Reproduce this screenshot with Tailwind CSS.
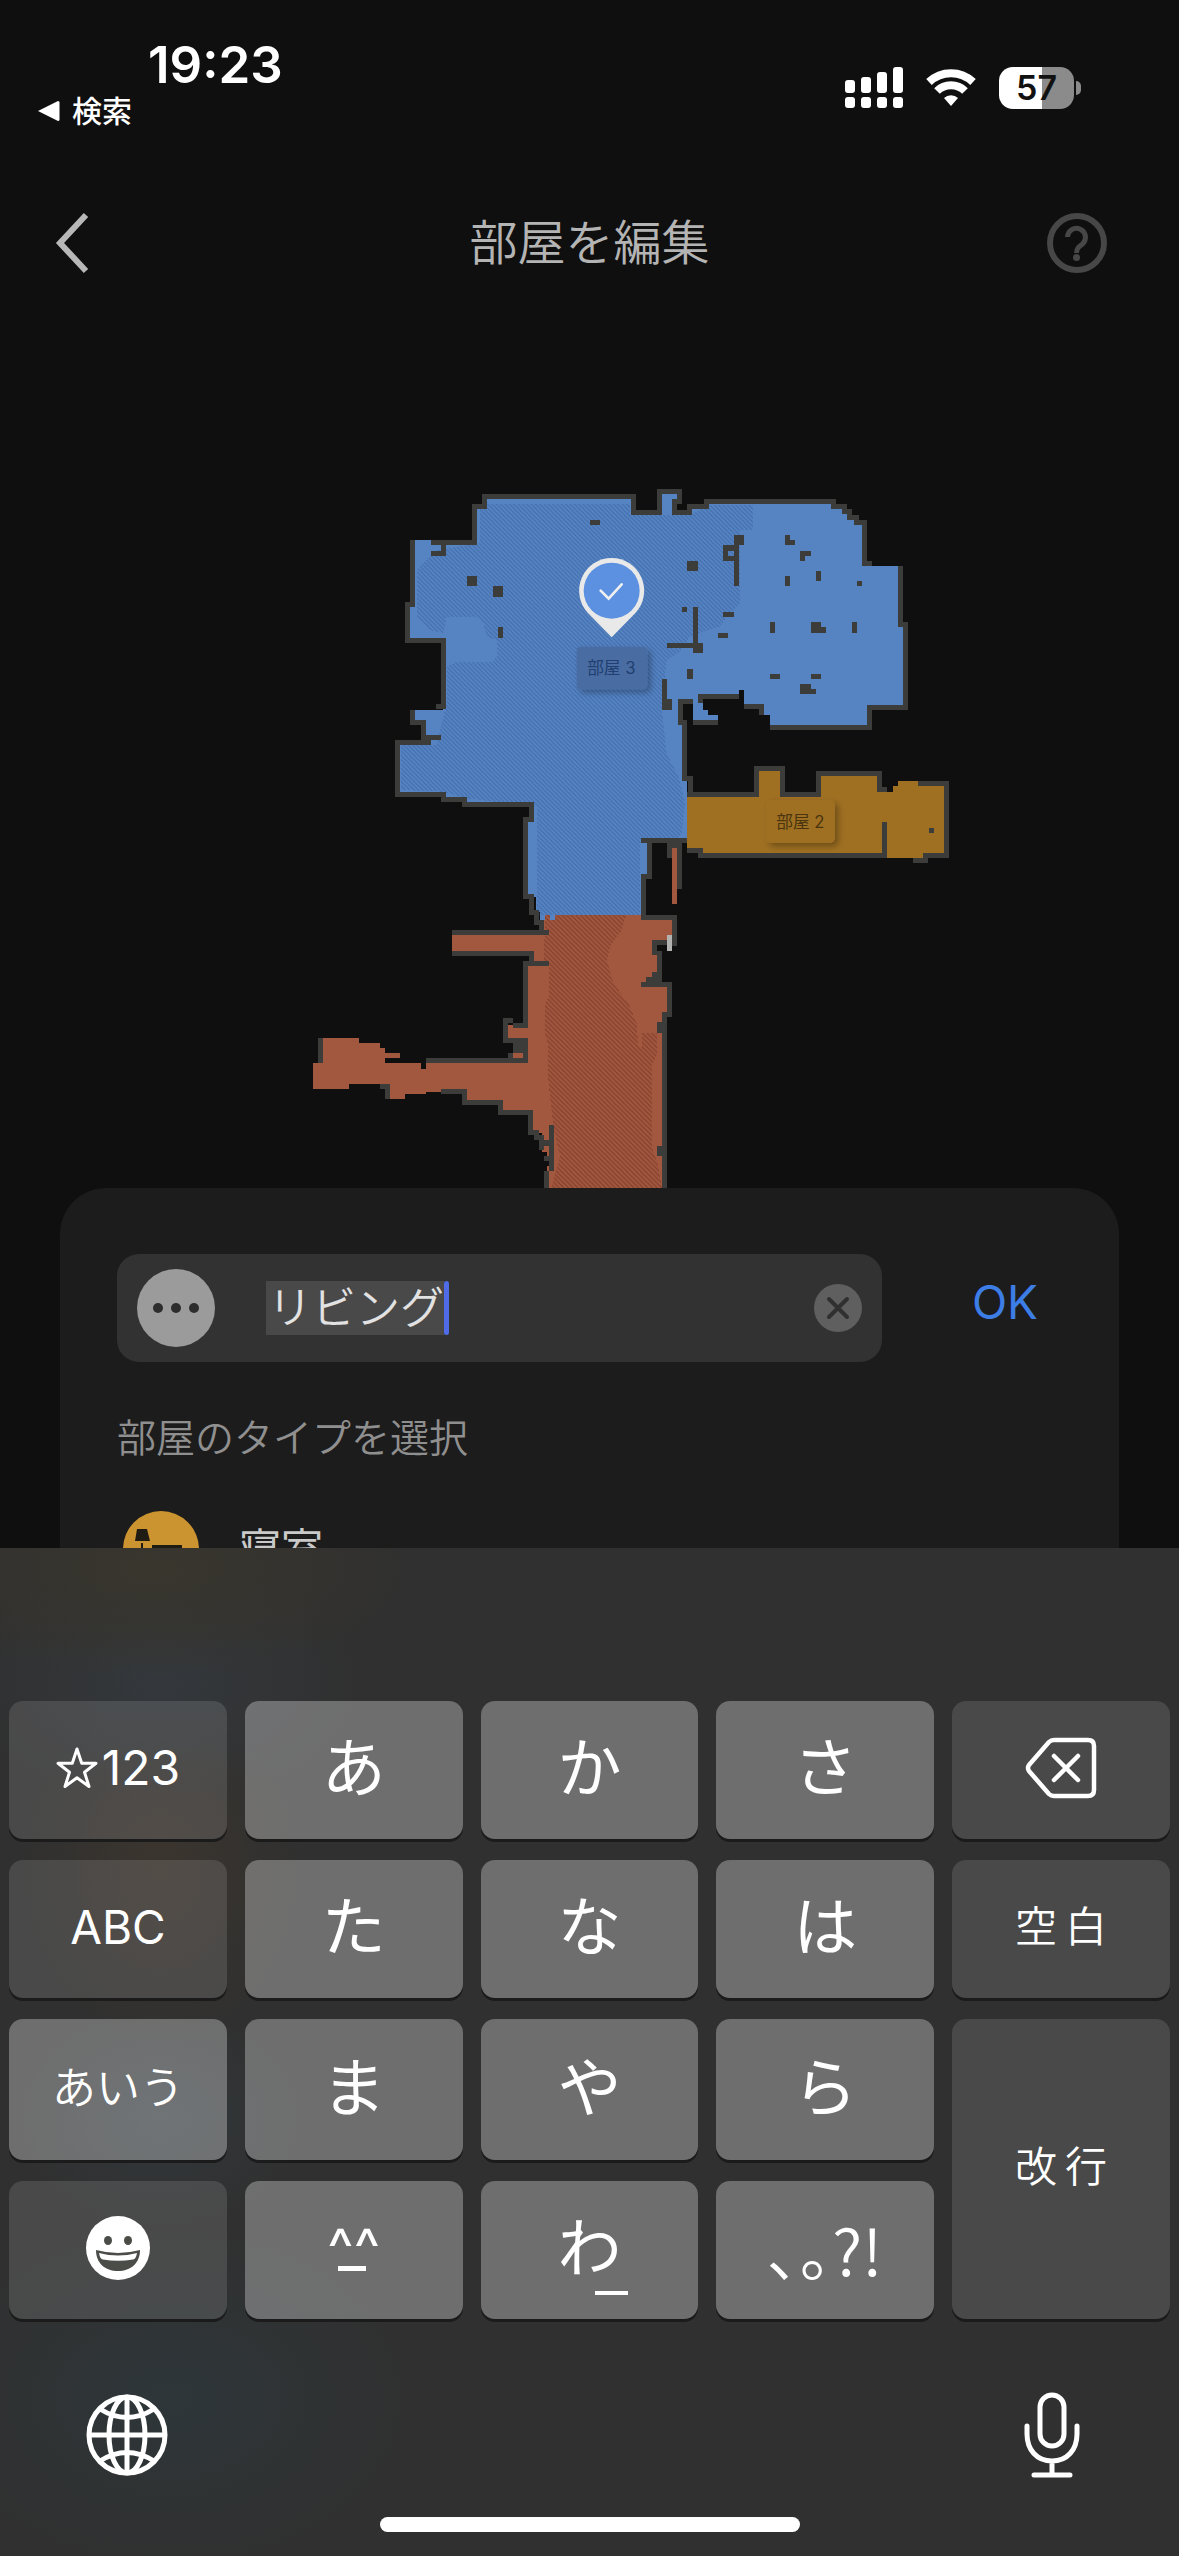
<!DOCTYPE html>
<html lang="ja">
<head>
    <meta charset="UTF-8">
    <meta name="viewport" content="width=device-width, initial-scale=1.0">
    <title>部屋を編集</title>
    <script src="https://cdn.jsdelivr.net/npm/@tailwindcss/browser@4"></script>
</head>
<body class="h-screen flex flex-col overflow-hidden bg-[#0f0f0f] text-white font-['Inter','Noto_Sans_CJK_JP',sans-serif]">

    <div class="flex-1 min-h-0 flex flex-col overflow-hidden">
        <!-- Status bar -->
        <div class="shrink-0 flex justify-between pl-9 pr-[98px] pt-9">
            <div class="flex flex-col">
                <span class="pl-28 text-[51px] leading-[58px] font-semibold">19:23</span>
                <a href="#" class="flex items-center gap-3 text-[30px] leading-[34px] font-medium">
                    <svg class="w-6 h-6" viewBox="0 0 24 24" fill="#fff"><path d="M2 12 22 2q1.500 0 1.500 1.500v17q0 1.500-1.500 1.500z"/></svg>
                    検索
                </a>
            </div>
            <div class="flex items-start gap-[22px] pt-[31px]">
                <svg class="w-[58px] h-[42px]" viewBox="0 0 58 42" fill="#fff">
                    <rect x="0" y="13" width="10" height="13" rx="3"/><rect x="16" y="10" width="10" height="16" rx="3"/>
                    <rect x="32" y="5" width="10" height="21" rx="3"/><rect x="48" y="0" width="10" height="26" rx="3"/>
                    <rect x="0" y="30" width="10" height="11" rx="3"/><rect x="16" y="30" width="10" height="11" rx="3"/>
                    <rect x="32" y="30" width="10" height="11" rx="3"/><rect x="48" y="30" width="10" height="11" rx="3"/>
                </svg>
                <svg class="w-[52px] h-[42px]" viewBox="0 0 50 42" fill="none" stroke="#fff" stroke-width="8">
                    <path d="M3 15a32 32 0 0 1 44 0"/><path d="M11 24a20 20 0 0 1 28 0"/>
                    <path d="M25 39l-7-8a10 10 0 0 1 14 0z" fill="#fff" stroke="none"/>
                </svg>
                <div class="flex items-center gap-[2px]">
                    <div class="w-[75px] h-[42px] rounded-[14px] bg-linear-to-r from-white from-57% to-[#8b8b8b] to-57% text-[#111] text-[34px] leading-[42px] font-semibold text-center">57</div>
                    <div class="w-[5px] h-[14px] rounded-r-full bg-[#8b8b8b]"></div>
                </div>
            </div>
        </div>

        <!-- Title bar -->
        <header class="shrink-0 flex items-center justify-between px-[54px] pt-[74px]">
            <button aria-label="戻る" class="w-[78px] h-[82px] flex items-center">
                <svg class="w-9 h-[62px]" viewBox="0 0 36 62" fill="none" stroke="#b8b8b8" stroke-width="6"><path d="M32 3 6 31l26 28"/></svg>
            </button>
            <h1 class="text-[48px] leading-[82px] font-[350] text-[#b4b4b4]">部屋を編集</h1>
            <button aria-label="ヘルプ" class="w-[78px] h-[60px]">
                <svg class="w-[60px] h-[60px]" viewBox="0 0 60 60" fill="none" stroke="#474747" stroke-width="6">
                    <circle cx="30" cy="30" r="27"/>
                    <path d="M20.500 24a9 9 0 1 1 15 7c-4 3-6 4.500-6 9" stroke-width="5"/>
                    <circle cx="29.500" cy="44.500" r="3.500" fill="#474747" stroke="none"/>
                </svg>
            </button>
        </header>

        <!-- Floor map -->
        <svg class="shrink-0 w-full" viewBox="0 852 3537 2712" shape-rendering="crispEdges">
            <defs>
                <pattern id="hatch-blue" width="13" height="13" patternUnits="userSpaceOnUse">
                    <path d="M-2-2 15 15M-2 11 2 15M11-2 15 2" stroke="#3f69a9" stroke-width="3" shape-rendering="auto"/>
                </pattern>
                <pattern id="hatch-red" width="14" height="14" patternUnits="userSpaceOnUse">
                    <path d="M-2-2 16 16M-2 12 2 16M12-2 16 2" stroke="#7d3b2a" stroke-width="3" shape-rendering="auto"/>
                </pattern>
                <filter id="soft" x="-20%" y="-20%" width="150%" height="160%"><feDropShadow dx="10" dy="10" stdDeviation="10" flood-opacity=".3"/></filter>
            </defs>

            <!-- room 1 -->
            <g transform="translate(1140 2340)">
                <path fill="#a2573f" d="M490 405H783V420H876V488H824V520H838V580L798 605V612H868V706H853V1224H500V1115H485V1060H453V997H360V967H252V935H138V942H75V957H30V912H-93V927H-201V849H-171V774H-63V789H0V804H15V819H60V834H15V849H123V866H138V842H437V780H376V735H437V550H453V520H216V457H490z"/>
                <path fill="url(#hatch-red)" d="M495 405H740L725 450 690 500 680 540 700 610 745 670 770 730 775 800H785V760H832V820L815 860V1100L832 1150 846 1223H515L540 1130 520 1040 505 900V800L495 760V670L508 650V550H492z"/>
                <path fill="none" stroke="#3c3c3a" stroke-width="15" d="M783 412H884V497M861 488H824V525M838 512V605M783 612H868V703H853V1224M216 457H507M216 520H453V550M508 550H437V735H399M399 720H376V780H437V842H137M183 935H253V967H362V997H452V1057H468V1072H485V1110M515 1035V1172M500 1172V1224M0 919H22V957M-178 774V849M898 190V327"/>
                <path fill="#3c3c3a" d="M832 727h20v32h-20zM832 1097h20v30h-20zM399 780h45v40h-45zM384 820h15v14h-15zM429 815h15v30h-15zM492 1080h16v18h-16zM492 1128h16v15h-16zM861 190h45v14h-45zM861 200h15v34h-15zM798 605v-15h18v-15h22v30z"/>
                <path fill="#a2573f" d="M399 820h30v14h-30zM876 204h15v168h-15zM-171 849h30v-20h-30z"/>
                <path fill="#0f0f0f" d="M492 1143h15v15h-15z"/>
                <path fill="#b3b3b1" d="M861 465h15v47h-15z"/>
            </g>

            <!-- room 3 -->
            <g transform="translate(1140 1410)">
                <path fill="#5684c3" d="M314 79H760V127H839V64H898V87H883V127H928V110H978V95H1360V110H1392V125H1408V142H1430V157H1453V280H1475V288H1562V464H1577V712H1469V772H1170V735H1145V710H1092V660H1077V680H970V720H985V735H1015V757H940V694H900V757H914V924H921V1112H808V1220H791V1335H525V1350H510V1335H495V1350H480V1327H468V1280H437V1048H453V1004H254V989H190V973H53V818H130V757H98V720H190V512H83V403H98V210H152V217H283V110H314z"/>
                <path fill="url(#hatch-blue)" d="M300 102H750V135H932L985 105H1120V180H1080V400L1040 440 1020 470 930 500 900 545 860 570 846 720 860 850 895 920 915 1000 905 1090 880 1120H780V1335H470V1010L260 985 190 965 62 960V825H170L200 700V590L230 575H340L350 560V510L320 500 310 460 290 440H200L190 490 150 480 110 440V300L170 240 300 220z"/>
                <path fill="none" stroke="#3c3c3a" stroke-width="15" d="M98 210V403H83V512H190V710H168M152 217H283V110H314V79H760V127H839V64H898V94H883V127H928V110H978V95H1360V110H1392V125H1408V142H1430V157H1453V280H1475M1562 288V464H1577V712H1469V772H1170M1145 735V710H1092M1077 680H962V700M940 757H1015M940 694H900V757H914V924H930V972M921 1112H783M808 1112V1220H791V1335M98 720V757H130V803H182M152 818H53V973H190V989H254V1004H453V1048H437V1280H453V1327H468V1358H484V1387H506M152 250H190V225M1069 225V348"/>
                <path fill="#3c3c3a" d="M630 150h30v15h-30zM261 318h30v30h-30zM339 348h30v33h-30zM354 471h15v32h-15zM921 272h33v30h-33zM906 411h15v15h-15zM939 411h15v110h-15zM861 519h90v15h-90zM939 519h30v30h-30zM921 597h18v30h-18zM846 627h15v92h-15zM861 687h15v32h-15z"/>
                <path fill="#3c3c3a" fill-rule="evenodd" d="M1062 195h30v30h-30zM1029 225h33v47h-33zM1044 242h18v15h-18zM1029 426h33v15h-33zM1014 489h30v15h-30zM1215 195h15v15h15v15h-30zM1260 243h33v15h-18v14h-15zM1308 303h15v30h-15zM1215 318h15v30h-15zM1431 333h15v15h-15zM1170 457h15v32h-15zM1293 457h30v14h15v18h-45zM1416 457h15v32h-15zM1170 612h30v15h-30zM1293 612h30v15h-30zM1260 642h33v15h15v15h-48z"/>
            </g>

            <!-- room 2 -->
            <g transform="translate(1920 1410)">
                <path fill="#9f7022" d="M141 972H350V895H427V972H535V910H718V965H758V948H774V933H834V940H920V1157H850V1164H740V1150H141z"/>
                <path fill="none" stroke="#3c3c3a" stroke-width="15" d="M142 972H350V895H427V972H535V910H718V957H741M834 940H920V1157H857V1172H820M141 1142H182V1157H733V1056"/>
                <path fill="#3c3c3a" d="M867 1073h15v15h-15z"/>
                <rect x="378" y="990" width="206" height="128" rx="12" fill="#9f7022" filter="url(#soft)"/>
                <text x="481" y="1073" text-anchor="middle" font-size="50" fill="#4a350f">部屋 2</text>
            </g>

            <!-- selected room pin -->
            <g transform="translate(1140 1410)" shape-rendering="auto">
                <rect x="590" y="530" width="212" height="128" rx="12" fill="#4a6da3" filter="url(#soft)"/>
                <text x="694" y="612" text-anchor="middle" font-size="50" fill="#213f70">部屋 3</text>
                <path fill="#e9e9e9" d="M695 264a98 98 0 0 1 72 164L695 502 623 428A98 98 0 0 1 695 264z"/>
                <circle cx="695" cy="362" r="84" fill="#5b91e0"/>
                <path d="M662 362l24 24 39-43" fill="none" stroke="#f0f0f0" stroke-width="8" stroke-linecap="round"/>
            </g>
        </svg>

        <!-- Room name sheet -->
        <section class="relative shrink-0 mx-[60px] px-[57px] pt-[66px] rounded-t-[46px] bg-[#1c1c1c]">
            <div class="flex items-center justify-between pr-6">
                <div class="flex items-center w-[765px] h-[108px] px-5 rounded-[22px] bg-[#323232]">
                    <svg class="shrink-0 w-[78px] h-[78px]" viewBox="0 0 78 78" fill="#2d2d2d">
                        <circle cx="39" cy="39" r="39" fill="#9b9b9b"/><circle cx="21" cy="39" r="5"/><circle cx="39" cy="39" r="5"/><circle cx="57" cy="39" r="5"/>
                    </svg>
                    <div class="flex-1 flex items-center pl-[51px]">
                        <input type="text" aria-label="部屋の名前" value="リビング" class="field-sizing-content h-[54px] pl-[2px] bg-[#494949] text-[44px] leading-[54px] font-[350] text-[#e2e2e2] outline-none">
                        <span class="w-[5px] h-[54px] rounded-full bg-[#4f6be6]"></span>
                    </div>
                    <button aria-label="クリア" class="shrink-0 w-12 h-12">
                        <svg viewBox="0 0 48 48"><circle cx="24" cy="24" r="24" fill="#5f5f5f"/><path d="M15 15l18 18M33 15 15 33" stroke="#303030" stroke-width="4" stroke-linecap="round"/></svg>
                    </button>
                </div>
                <button class="pb-3 text-[46px] leading-[60px] text-[#3d7de6]">OK</button>
            </div>
            <h2 class="mt-12 text-[39px] leading-[56px] font-[350] text-[#8f8f8f]">部屋のタイプを選択</h2>
            <ul>
                <li class="flex items-center gap-10 mt-[44px] pl-[6px] text-[42px] leading-[78px] text-[#c9c9c9]">
                    <svg class="w-[76px] h-[76px]" viewBox="0 0 76 76">
                        <circle cx="38" cy="38" r="38" fill="#cb9431"/>
                        <path fill="#1f1c14" d="M14 18h10l3 12H12zM18 32h2v24h-2zM29 34h30v20H29z"/>
                    </svg>
                    寝室
                </li>
            </ul>
        </section>
    </div>

    <!-- Keyboard -->
    <div class="relative shrink-0 pt-[153px] pb-6 bg-[#303030] bg-[radial-gradient(260px_110px_at_150px_20px,#39362d,transparent),radial-gradient(200px_120px_at_160px_135px,#34383c,transparent),radial-gradient(140px_180px_at_160px_320px,#3b352e,transparent),radial-gradient(140px_110px_at_160px_570px,#32383c,transparent),radial-gradient(240px_170px_at_170px_850px,#2e3639,transparent)]">
        <div class="grid grid-cols-5 grid-rows-[138px_138px_141px_138px] gap-x-[18px] gap-y-[21px] px-[9px] text-[64px] leading-none [&>button]:relative [&>button]:flex [&>button]:items-center [&>button]:justify-center [&>button]:pb-1 [&>button]:rounded-[14px] [&>button]:shadow-[0_3px_0_#1b1b1b]">
            <button class="bg-white/12 text-[48px]">
                <svg class="w-[42px] h-[42px] mr-1" viewBox="0 0 42 42" fill="none" stroke="#fff" stroke-width="3" stroke-linejoin="round"><path d="M21 2l4.700 14.300H40L28.500 25.200 33 39.500 21 30.800 9 39.500l4.500-14.300L2 16.300h14.300z"/></svg>
                123
            </button>
            <button class="bg-white/30">あ</button>
            <button class="bg-white/30">か</button>
            <button class="bg-white/30">さ</button>
            <button aria-label="削除" class="bg-white/12">
                <svg class="w-[72px] h-[62px]" viewBox="0 0 72 62" fill="none" stroke="#fff" stroke-width="4.500" stroke-linecap="round" stroke-linejoin="round">
                    <path d="M29 3H63q6 0 6 6V53q0 6-6 6H29q-3 0-5-2L4 34q-2-3 0-6L24 5q2-2 5-2z"/><path d="M29 19 53 43M53 19 29 43"/>
                </svg>
            </button>

            <button class="bg-white/12 text-[46px]">ABC</button>
            <button class="bg-white/30">た</button>
            <button class="bg-white/30">な</button>
            <button class="bg-white/30">は</button>
            <button class="gap-2 bg-white/12 text-[42px] font-[350]"><span>空</span><span>白</span></button>

            <button class="bg-white/30 text-[44px] font-[350]">あいう</button>
            <button class="bg-white/30">ま</button>
            <button class="bg-white/30">や</button>
            <button class="bg-white/30">ら</button>
            <button class="row-span-2 gap-2 bg-white/12 text-[42px] font-[350]"><span>改</span><span>行</span></button>

            <button aria-label="絵文字" class="bg-white/12">
                <svg class="w-[66px] h-[66px]" viewBox="0 0 66 66">
                    <circle cx="33" cy="33" r="32" fill="#fff"/>
                    <ellipse cx="23" cy="25.500" rx="4" ry="4.500" fill="#4b4d49"/><ellipse cx="43" cy="25.500" rx="4" ry="4.500" fill="#4b4d49"/>
                    <path d="M11 35q22 6 44 0c0 13-9 21-22 21S11 48 11 35z" fill="#4b4d49"/>
                    <path d="M14 38q19 5 38 0-1 6-4 6.500-15 2.500-30 0-3-.500-4-6.500z" fill="#fff"/>
                </svg>
            </button>
            <button class="bg-white/30 text-[56px]">^^<span class="absolute left-[93px] top-[85px] w-7 h-[5px] bg-white"></span></button>
            <button class="bg-white/30">わ<span class="absolute left-[114px] top-[110px] w-[33px] h-1 bg-white"></span></button>
            <button class="bg-white/30 text-[64px] font-[350] font-['Noto_Sans_CJK_JP',sans-serif]">､｡?!</button>
        </div>

        <div class="flex items-center justify-between pl-[86px] pr-[98px] mt-[72px]">
            <button aria-label="キーボード切替" class="w-[82px] h-[82px]">
                <svg viewBox="0 0 82 82" fill="none" stroke="#fff" stroke-width="5">
                    <circle cx="41" cy="41" r="38"/><ellipse cx="41" cy="41" rx="18" ry="38"/>
                    <path d="M41 3V79M3 41H79M14 15q27 17 54 0M14 67q27-17 54 0"/>
                </svg>
            </button>
            <button aria-label="音声入力" class="w-[58px] h-[88px]">
                <svg viewBox="0 0 58 88" fill="none" stroke="#fff" stroke-width="5" stroke-linecap="round">
                    <rect x="17" y="4" width="24" height="51" rx="12"/><path d="M4 35v8c0 16 10 27 25 27s25-11 25-27v-8M29 70v14M11 84h36"/>
                </svg>
            </button>
        </div>
        <div class="w-[420px] h-[15px] mt-[38px] mx-auto rounded-full bg-white"></div>
    </div>
</body>
</html>
